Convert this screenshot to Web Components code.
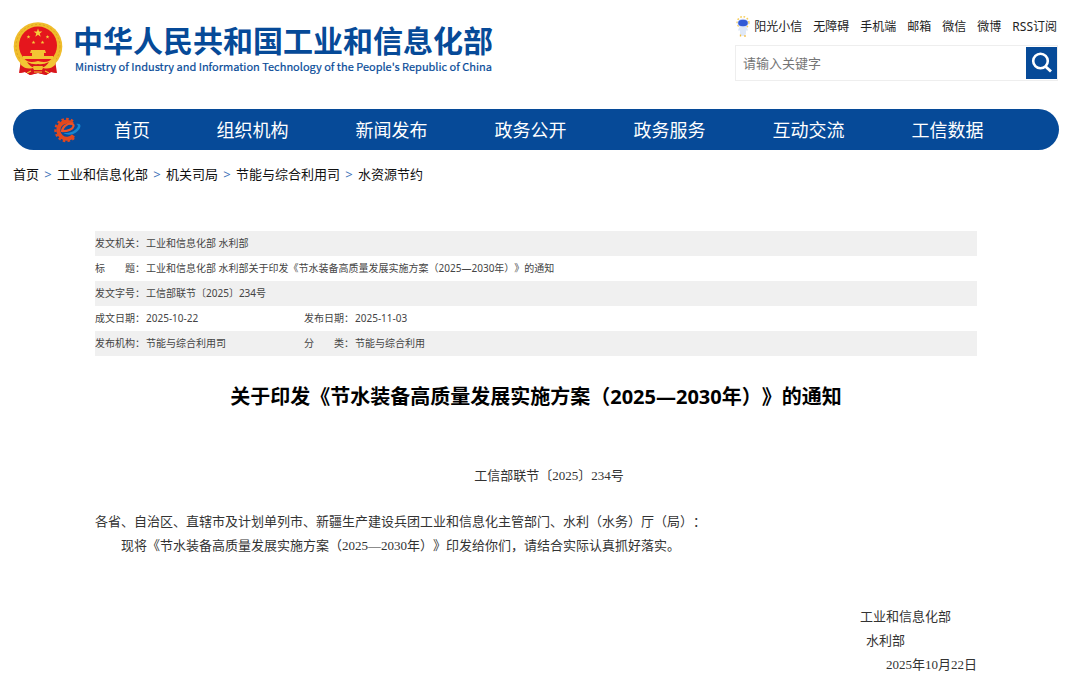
<!DOCTYPE html>
<html lang="zh-CN">
<head>
<meta charset="utf-8">
<title>工业和信息化部</title>
<style>
html{background:#fff}
body{margin:0;font-family:"Noto Sans","Noto Sans CJK SC",sans-serif;color:#333;text-spacing-trim:space-all}
</style>
</head>
<body>
<miit-page></miit-page>
<script>
const define=(name,html,setup)=>customElements.define(name,class extends HTMLElement{
  constructor(){
    super();
    const t=document.createElement('template');
    t.innerHTML=html;
    this.attachShadow({mode:'open'}).append(t.content.cloneNode(true));
    if(setup)setup.call(this,this.shadowRoot);
  }
});

const starPoints=(cx,cy,r)=>Array.from({length:10},(_,i)=>{
  const a=-Math.PI/2+i*Math.PI/5,d=i%2?r*.4:r;
  return (cx+d*Math.cos(a)).toFixed(2)+','+(cy+d*Math.sin(a)).toFixed(2);
}).join(' ');

define('national-emblem',`<style>:host{display:block;flex:none;width:50px;height:54px}svg{display:block}</style>
<svg width="50" height="54" viewBox="0 0 50 54" role="img" aria-label="国徽">
<path d="M8 38L6 51L12 50L17 53L25 51L33 53L38 50L44 51L42 38Z" fill="#d9151c"/>
<circle cx="25" cy="24.500" r="24.300" fill="#f0bd2c"/>
<circle cx="25" cy="24.500" r="22" fill="none" stroke="#dfa51f" stroke-width="1" stroke-dasharray="2 2"/>
<circle cx="25" cy="23.500" r="19" fill="#e5161d"/>
<g fill="#f6cf3c" id="stars"></g>
<path d="M18 28h14l1 3h-2v3h9v3H10v-3h9v-3h-2z" fill="#f3c534"/>
<path d="M7 36q9 6 18 3q9 3 18-3l-1 8q-3 5-8 4q-9-1-18 0q-5 1-8-4z" fill="#f3c534"/>
<path d="M14 40q6 3 11 2q5 1 11-2q-4 6-7 5h-8q-3 1-7-5z" fill="#d9151c"/>
<path d="M8 43q5 5 12 3l1 2h8l1-2q7 2 12-3l1 8l-5-1l-5 3l-8-2l-8 2l-5-3l-5 1z" fill="#d9151c"/>
<path d="M20 44h10l-2 4h-6z" fill="#f0bd2c"/>
<path d="M14 51l4-2M36 51l-4-2M21 50h8" stroke="#f3c534" stroke-width="1.200"/>
</svg>`,function(r){
  r.querySelector('#stars').innerHTML=[[25,11,4.6],[15.500,15,2],[34.500,15,2],[20.500,20.500,2],[29.500,20.500,2]].map(s=>`<polygon points="${starPoints(...s)}"/>`).join('');
});

define('gear-logo',`<style>:host{display:block;flex:none;width:27px;height:26px}svg{display:block}</style>
<svg width="27" height="26" viewBox="0 0 27 26" aria-hidden="true">
<path d="M20 21A11 11 0 1 1 20 5" fill="none" stroke="#e2481e" stroke-width="2.400" stroke-dasharray="2.500 2.200"/>
<path d="M19.500 18.500A8.500 8.500 0 1 1 18.500 6.800" fill="none" stroke="#e2481e" stroke-width="4"/>
<path d="M8 15C8 10 13 6.500 17 6.500C21 7 20 11 16 12.800C13.500 14 11 14.200 8 14.200" fill="none" stroke="#ee5226" stroke-width="2.200"/>
<path d="M22 7C27 5.500 28 9.500 24 13.800C20 18 13.500 19 9.500 16C15 16.500 20.500 14.500 23 11C24.500 9 24 7.500 22 7Z" fill="#1687cf"/>
</svg>`);

define('sun-robot',`<style>:host{display:block;flex:none;width:14px;height:22px}svg{display:block}</style>
<svg width="14" height="22" viewBox="0 0 14 22" aria-hidden="true">
<circle cx="7" cy="6.500" r="5.800" fill="none" stroke="#f6cc57" stroke-width="1.600" stroke-dasharray="1.600 1.800"/>
<path d="M4 10h6l2 4-1 1-1-1v4l-1.500 2h-3L4 18v-4l-1 1-1-1z" fill="#dfe8f7"/>
<ellipse cx="7" cy="7" rx="5.600" ry="4.300" fill="#cfdaf8"/>
<ellipse cx="7" cy="7" rx="4.800" ry="3.200" fill="#3159d5"/>
<path d="M4.500 18.500v2M9 19v2" stroke="#f2bd45" stroke-width="1.300"/>
</svg>`);

define('site-brand',`<style>
:host{display:flex;align-items:flex-start;gap:10px;padding-top:22px}
.names{padding-top:3px;color:#064a98;white-space:nowrap}
h1{margin:0;font:bold 30px/34px "Liberation Sans","Noto Sans CJK SC",sans-serif}
p{margin:0;font:11px/14px "Noto Sans CJK SC",sans-serif;padding-left:2px;-webkit-text-stroke:.2px}
</style><national-emblem></national-emblem><div class="names"><h1>中华人民共和国工业和信息化部</h1><p lang="en">Ministry of Industry and Information Technology of the People's Republic of China</p></div>`);

define('quick-links',`<style>
:host{display:block}
nav{display:flex;align-items:center;justify-content:flex-end;gap:11px;height:22px;padding-right:1px}
a{display:flex;align-items:center;gap:4px;color:#222;text-decoration:none;font-size:12px;line-height:18px;white-space:nowrap}
</style><nav aria-label="快捷入口"><a href="#"><sun-robot></sun-robot>阳光小信</a><a href="#">无障碍</a><a href="#">手机端</a><a href="#">邮箱</a><a href="#">微信</a><a href="#">微博</a><a href="#">RSS订阅</a></nav>`);

define('site-search',`<style>
:host{display:block}
form{display:flex;align-items:center;box-sizing:border-box;height:36px;border:1px solid #eee;margin:0}
input{flex:1;min-width:0;height:30px;box-sizing:border-box;border:0;outline:0;padding:0 7px;background:none;font:13px/20px "Noto Sans","Noto Sans CJK SC",sans-serif;color:#333}
input::placeholder{color:#757575;opacity:1}
button{flex:none;width:31px;height:32px;border:0;padding:0;background:#064a98;display:grid;place-items:center}
</style><form role="search"><input type="text" aria-label="搜索" placeholder="请输入关键字"><button type="button" aria-label="搜索"><svg width="22" height="22" viewBox="0 0 22 22" fill="none" stroke="#fff" aria-hidden="true"><circle cx="9.500" cy="9" r="7.300" stroke-width="2.600"/><path d="M14.500 14.500L20 19.500" stroke-width="3"/></svg></button></form>`);

define('main-nav',`<style>
:host{display:block}
nav{display:grid;grid-template-columns:68px 102px repeat(6,1fr) 42px;align-items:center;height:41px;border-radius:21px;background:#064a98}
gear-logo{justify-self:end}
a{color:#fff;text-decoration:none;text-align:center;font-size:18px;line-height:26px;white-space:nowrap}
</style><nav aria-label="主导航"><gear-logo></gear-logo><a href="#">首页</a><a href="#">组织机构</a><a href="#">新闻发布</a><a href="#">政务公开</a><a href="#">政务服务</a><a href="#">互动交流</a><a href="#">工信数据</a></nav>`);

define('bread-crumbs',`<style>
:host{display:block}
ol{display:flex;flex-wrap:wrap;list-style:none;margin:0;padding:0;font-size:13px;line-height:20px}
li{display:flex}
a{color:#111;text-decoration:none}
li+li::before{content:">";width:18px;text-align:center;color:#3d72b8}
</style><nav aria-label="当前位置"><ol><li><a href="#">首页</a></li><li><a href="#">工业和信息化部</a></li><li><a href="#">机关司局</a></li><li><a href="#">节能与综合利用司</a></li><li><a href="#">水资源节约</a></li></ol></nav>`);

define('doc-meta',`<style>
:host{display:block}
table{width:100%;border-collapse:collapse;table-layout:fixed;font-size:10px;line-height:15px;color:#444}
th,td{height:25px;padding:0;text-align:left;font-weight:400;white-space:nowrap}
tr:nth-child(odd){background:#f0f0f0}
.l{width:51px}.v{width:158px}
.s{display:inline-flex;justify-content:space-between;width:40px}
</style><table><colgroup><col class="l"><col class="v"><col class="l"><col></colgroup><tbody>
<tr><th scope="row">发文机关：</th><td colspan="3">工业和信息化部 水利部</td></tr>
<tr><th scope="row"><span class="s"><span>标</span><span>题</span></span>：</th><td colspan="3">工业和信息化部 水利部关于印发《节水装备高质量发展实施方案（2025—2030年）》的通知</td></tr>
<tr><th scope="row">发文字号：</th><td colspan="3">工信部联节〔2025〕234号</td></tr>
<tr><th scope="row">成文日期：</th><td>2025-10-22</td><th scope="row">发布日期：</th><td>2025-11-03</td></tr>
<tr><th scope="row">发布机构：</th><td>节能与综合利用司</td><th scope="row"><span class="s"><span>分</span><span>类</span></span>：</th><td>节能与综合利用</td></tr>
</tbody></table>`);

define('doc-body',`<style>
:host{display:block}
h2{margin:0;text-align:center;font-size:20px;line-height:28px;font-weight:700;color:#000}
.text{padding-top:53px;font:13px/24px "Liberation Serif","Noto Sans CJK SC",serif;color:#333}
p{margin:0}
.no{text-align:center;text-indent:2em;margin-bottom:22px}
.in{text-indent:2em}
.sign{margin-top:47px;text-align:right}
.sign p:nth-child(1){padding-right:2em}
.sign p:nth-child(2){padding-right:72px}
</style><h2>关于印发《节水装备高质量发展实施方案（2025—2030年）》的通知</h2>
<div class="text"><p class="no">工信部联节〔2025〕234号</p><p>各省、自治区、直辖市及计划单列市、新疆生产建设兵团工业和信息化主管部门、水利（水务）厅（局）：</p><p class="in">现将《节水装备高质量发展实施方案（2025—2030年）》印发给你们，请结合实际认真抓好落实。</p>
<div class="sign"><p>工业和信息化部</p><p>水利部</p><p>2025年10月22日</p></div></div>`);

define('miit-page',`<style>
:host{display:block;padding:0 21px 0 13px}
header{display:flex;justify-content:space-between;height:109px}
.tools{width:323px;margin-right:1px;padding-top:16px;display:flex;flex-direction:column;gap:7px}
bread-crumbs{margin-top:14px}
main{padding:47px 82px 0}
doc-body{margin-top:27px}
</style><header><site-brand></site-brand><div class="tools"><quick-links></quick-links><site-search></site-search></div></header>
<main-nav></main-nav><bread-crumbs></bread-crumbs>
<main><doc-meta></doc-meta><doc-body></doc-body></main>`);
</script>
</body>
</html>
